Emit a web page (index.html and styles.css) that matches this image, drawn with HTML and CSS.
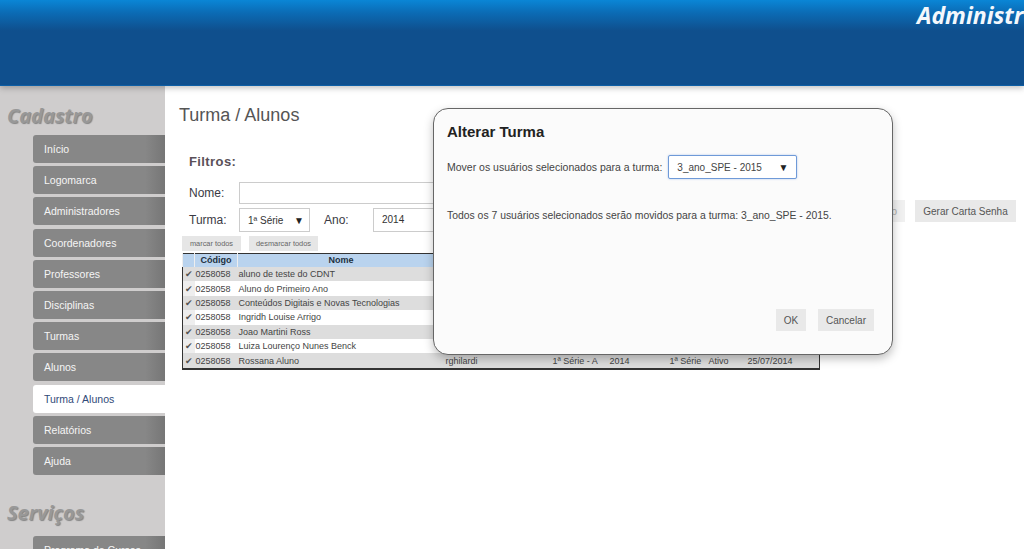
FILE: index.html
```html
<!DOCTYPE html>
<html lang="pt-BR">
<head>
    <meta charset="UTF-8">
    <meta name="viewport" content="width=device-width, initial-scale=1.0">
    <title>Turma / Alunos</title>
    <link rel="stylesheet" href="styles.css">
</head>
<body>
    <!-- Topo -->
    <header class="topo">
        <div class="topo-titulo">Administração</div>
    </header>

    <div class="pagina">
        <!-- Menu lateral -->
        <aside class="lateral">
            <h2 class="lateral-titulo">Cadastro</h2>
            <nav class="menu">
                <a class="menu-item">Início</a>
                <a class="menu-item">Logomarca</a>
                <a class="menu-item">Administradores</a>
                <a class="menu-item">Coordenadores</a>
                <a class="menu-item">Professores</a>
                <a class="menu-item">Disciplinas</a>
                <a class="menu-item">Turmas</a>
                <a class="menu-item">Alunos</a>
                <a class="menu-item ativo">Turma / Alunos</a>
                <a class="menu-item">Relatórios</a>
                <a class="menu-item">Ajuda</a>
            </nav>
            <h2 class="lateral-titulo servicos">Serviços</h2>
            <nav class="menu">
                <a class="menu-item">Programa de Cursos</a>
            </nav>
        </aside>

        <!-- Conteudo -->
        <main class="conteudo">
            <h1 class="titulo">Turma / Alunos</h1>
            <div class="filtros-titulo">Filtros:</div>

            <div class="linha linha-nome">
                <label class="rotulo">Nome:</label>
                <div class="campo campo-nome"></div>
            </div>

            <div class="linha linha-turma">
                <label class="rotulo">Turma:</label>
                <div class="campo campo-select campo-turma"><span>1ª Série</span><span class="seta">▼</span></div>
                <label class="rotulo rotulo-ano">Ano:</label>
                <div class="campo campo-ano">2014</div>
                <div class="acoes">
                    <button class="botao botao-mover">Mover Aluno</button>
                    <button class="botao botao-carta">Gerar Carta Senha</button>
                </div>
            </div>

            <div class="marcar">
                <button class="botao-mini marcar-todos">marcar todos</button>
                <button class="botao-mini desmarcar-todos">desmarcar todos</button>
            </div>

            <table class="tabela">
                <colgroup>
                    <col class="c-check"><col class="c-codigo"><col class="c-nome"><col class="c-login">
                    <col class="c-turma"><col class="c-ano"><col class="c-serie"><col class="c-status"><col class="c-data">
                </colgroup>
                <thead>
                    <tr><th></th><th>Código</th><th>Nome</th><th></th><th></th><th></th><th></th><th></th><th></th></tr>
                </thead>
                <tbody>
                    <tr><td class="marca">✔</td><td>0258058</td><td>aluno de teste do CDNT</td><td></td><td></td><td></td><td></td><td></td><td></td></tr>
                    <tr><td class="marca">✔</td><td>0258058</td><td>Aluno do Primeiro Ano</td><td></td><td></td><td></td><td></td><td></td><td></td></tr>
                    <tr><td class="marca">✔</td><td>0258058</td><td>Conteúdos Digitais e Novas Tecnologias</td><td></td><td></td><td></td><td></td><td></td><td></td></tr>
                    <tr><td class="marca">✔</td><td>0258058</td><td>Ingridh Louise Arrigo</td><td></td><td></td><td></td><td></td><td></td><td></td></tr>
                    <tr><td class="marca">✔</td><td>0258058</td><td>Joao Martini Ross</td><td></td><td></td><td></td><td></td><td></td><td></td></tr>
                    <tr><td class="marca">✔</td><td>0258058</td><td>Luiza Lourenço Nunes Benck</td><td></td><td></td><td></td><td></td><td></td><td></td></tr>
                    <tr><td class="marca">✔</td><td>0258058</td><td>Rossana Aluno</td><td>rghilardi</td><td>1ª Série - A</td><td>2014</td><td>1ª Série</td><td>Ativo</td><td>25/07/2014</td></tr>
                </tbody>
            </table>
        </main>
    </div>

    <!-- Janela Alterar Turma -->
    <div class="janela">
        <h3 class="janela-titulo">Alterar Turma</h3>
        <div class="janela-linha">
            <span>Mover os usuários selecionados para a turma:</span>
            <div class="campo-select janela-select"><span>3_ano_SPE - 2015</span><span class="seta">▼</span></div>
        </div>
        <p class="janela-texto">Todos os 7 usuários selecionados serão movidos para a turma: 3_ano_SPE - 2015.</p>
        <div class="janela-botoes">
            <button class="botao botao-ok">OK</button>
            <button class="botao botao-cancelar">Cancelar</button>
        </div>
    </div>
</body>
</html>
```

FILE: styles.css
```css
html, body {
    height: 549px;
    overflow: hidden;
}
body {
    margin: 0;
    font-family: "Liberation Sans", Arial, sans-serif;
    background-color: #ffffff;
    color: #333333;
}
button {
    font-family: "Liberation Sans", Arial, sans-serif;
    border: none;
    padding: 0;
}

/* Topo */
.topo {
    height: 85px;
    background: linear-gradient(180deg, #0a86d6 0%, #0b6db7 14%, #0f4f8d 36%, #0f4f8d 100%);
    border-bottom: 1px solid #0d5fa6;
    box-shadow: 0 2px 6px rgba(0, 0, 0, 0.25);
    display: flex;
    justify-content: flex-start;
    padding-left: 917px;
    overflow: hidden;
    position: relative;
}
.topo-titulo {
    font-family: "Open Sans", sans-serif;
    font-style: italic;
    font-weight: 700;
    font-size: 23px;
    line-height: 30px;
    color: #f4f8fc;
    white-space: nowrap;
}

/* Lateral */
.pagina {
    display: flex;
    height: 463px;
}
.lateral {
    width: 165px;
    flex-shrink: 0;
    background-color: #cfcdcd;
    overflow: hidden;
}
.lateral-titulo {
    margin: 17px 0 7px 7px;
    height: 25px;
    font-family: "Open Sans", sans-serif;
    font-style: italic;
    font-weight: 700;
    font-size: 20px;
    line-height: 25px;
    color: #989898;
    text-shadow: 1px 1px 1px #858585;
}
.lateral-titulo.servicos {
    margin-top: 25px;
    margin-bottom: 11px;
}
.menu {
    display: flex;
    flex-direction: column;
    gap: 3.2px;
    margin-left: 33px;
}
.menu-item {
    height: 28px;
    line-height: 28px;
    padding-left: 11px;
    border-radius: 3px 0 0 3px;
    background: linear-gradient(90deg, #878787 0%, #878787 85%, #767676 100%);
    color: #f5f5f5;
    font-size: 10.5px;
}
.menu-item.ativo {
    background: #ffffff;
    color: #2f4a78;
}

/* Conteudo */
.conteudo {
    flex: 1;
    min-width: 0;
    overflow: hidden;
    padding-left: 14px;
}
.titulo {
    margin: 18px 0 0 0;
    font-size: 18px;
    line-height: 22px;
    font-weight: normal;
    color: #555555;
}
.filtros-titulo {
    margin: 28px 0 0 10px;
    font-size: 13px;
    line-height: 16px;
    font-weight: bold;
    letter-spacing: 0.4px;
    color: #5a5058;
}
.linha {
    display: flex;
    align-items: center;
    margin-left: 10px;
}
.linha-nome {
    margin-top: 12px;
}
.linha-turma {
    margin-top: 4px;
}
.rotulo {
    width: 50px;
    font-size: 12px;
    color: #3a3a44;
}
.campo {
    box-sizing: border-box;
    border: 1px solid #cccccc;
    background-color: #ffffff;
    font-size: 10px;
    color: #333333;
}
.campo-nome {
    width: 400px;
    height: 22px;
}
.campo-select {
    display: flex;
    align-items: center;
    justify-content: space-between;
    box-sizing: border-box;
}
.campo-turma {
    width: 71px;
    height: 24px;
    padding: 0 5px 0 8px;
}
.rotulo-ano {
    width: 49px;
    margin-left: 14px;
}
.campo-ano {
    width: 200px;
    height: 24px;
    line-height: 22px;
    padding-left: 8px;
}
.seta {
    font-size: 10px;
    color: #222222;
}
.acoes {
    display: flex;
    gap: 10px;
    margin-left: auto;
    margin-right: 8px;
    margin-top: -8px;
    align-self: flex-start;
}
.botao {
    height: 22px;
    background-color: #e9e9e9;
    color: #555555;
    font-size: 10px;
}
.botao-mover {
    width: 105px;
    padding-right: 8px;
    text-align: right;
    background-color: #f0f0f0;
    color: #aaaaaa;
}
.botao-carta {
    width: 101px;
}
.marcar {
    display: flex;
    gap: 8px;
    margin: 4px 0 0 3px;
}
.botao-mini {
    height: 15px;
    background-color: #e6e6e6;
    color: #666666;
    font-size: 7.4px;
}
.marcar-todos {
    width: 59px;
}
.desmarcar-todos {
    width: 69px;
}

/* Tabela */
.tabela {
    table-layout: fixed;
    width: 637px;
    margin: 2px 0 0 3px;
    border-collapse: collapse;
    border: 1px solid #333333;
    border-bottom-width: 2px;
    font-size: 9px;
    color: #444444;
}
.c-check { width: 12px; }
.c-codigo { width: 43px; }
.c-nome { width: 207px; }
.c-login { width: 107px; }
.c-turma { width: 57px; }
.c-ano { width: 60px; }
.c-serie { width: 39px; }
.c-status { width: 39px; }
.c-data { width: 73px; }
.tabela th {
    height: 13px;
    padding: 0;
    background-color: #b9d3ee;
    border-left: 1px solid #eeeeee;
    font-size: 9px;
    line-height: 13px;
    color: #22303f;
}
.tabela td {
    height: 14.4px;
    padding: 0 0 0 1px;
    line-height: 14px;
    white-space: nowrap;
    overflow: hidden;
}
.tabela tbody tr:nth-child(odd) td {
    background-color: #dddddd;
}
.tabela td.marca {
    padding: 0 0 0 2px;
    font-size: 9px;
    color: #555555;
    background-color: #eeeeee;
}

/* Janela */
.janela {
    position: absolute;
    left: 433px;
    top: 108px;
    width: 431px;
    height: 245px;
    padding: 0 14px 0 13px;
    border: 1px solid #666666;
    border-radius: 15px;
    background-color: #fbfbfb;
    box-shadow: 0 4px 10px rgba(0, 0, 0, 0.25);
    display: flex;
    flex-direction: column;
    font-size: 10.4px;
    color: #444444;
}
.janela-titulo {
    margin: 14px 0 0 0;
    font-size: 15px;
    line-height: 18px;
    font-weight: bold;
    color: #222222;
}
.janela-linha {
    display: flex;
    align-items: center;
    gap: 6px;
    margin-top: 14px;
    font-size: 10.5px;
}
.janela-select {
    width: 129px;
    height: 24px;
    padding: 0 8px 0 8px;
    border: 1px solid #6f9ad8;
    border-radius: 2px;
    background-color: #ffffff;
    box-shadow: 0 0 2px rgba(90, 140, 220, 0.5);
    font-size: 10px;
}
.janela-texto {
    margin: 31px 0 0 0;
    line-height: 12px;
}
.janela-botoes {
    display: flex;
    justify-content: flex-end;
    gap: 12px;
    margin-top: auto;
    margin-bottom: 23px;
    margin-right: 4px;
}
.botao-ok {
    width: 30px;
}
.botao-cancelar {
    width: 56px;
}
```
